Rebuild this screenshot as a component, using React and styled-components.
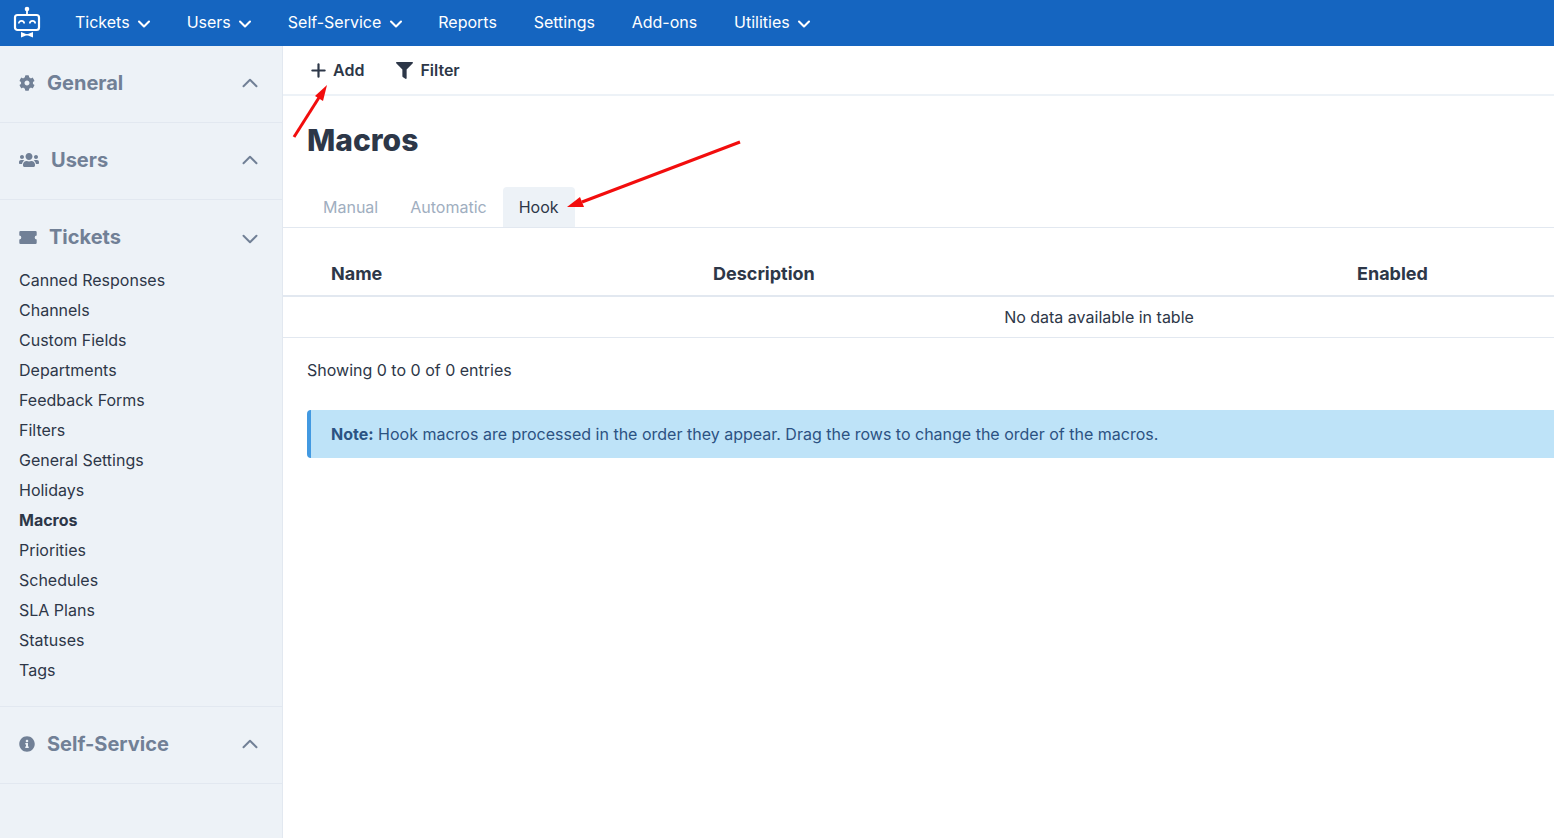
import React from "react";
import styled, { createGlobalStyle } from "styled-components";
import { FaCog, FaUsers, FaInfoCircle, FaFilter } from "react-icons/fa";
import { FiChevronDown, FiChevronUp, FiPlus } from "react-icons/fi";

const GlobalStyle = createGlobalStyle`
    html, body {
        margin: 0;
        height: 100%;
        overflow: hidden;
        background: #fff;
        font-family: Inter, "Liberation Sans", sans-serif;
        color: #2d3748;
    }
    * { box-sizing: border-box; }
`;

const Page = styled.div`
    width: 1554px;
    height: 838px;
    position: relative;
    overflow: hidden;
    display: flex;
    flex-direction: column;
`;

const TopBar = styled.div`
    height: 46px;
    flex: none;
    background: #1565c0;
    display: flex;
    align-items: center;
    padding-left: 12px;
`;

const LogoBox = styled.div`
    width: 30px;
    height: 40px;
    margin-right: 33px;
    display: flex;
`;

const NavItem = styled.div`
    color: #fff;
    font-size: 16px;
    display: flex;
    align-items: center;
    gap: 4.5px;
    padding-bottom: 2px;
    margin-right: ${(p) => (p.$menu ? 32.5 : 36.8)}px;
    svg { font-size: 20px; margin-top: 3px; stroke-width: 2.5; }
`;

const Body = styled.div`
    flex: 1;
    display: flex;
    min-height: 0;
`;

const Sidebar = styled.div`
    width: 283px;
    flex: none;
    background: #edf2f7;
    border-right: 1px solid #e2e8f0;
`;

const Section = styled.div`
    border-bottom: 1px solid #e2e8f0;
`;

const SectionHead = styled.div`
    height: 76px;
    padding: 0 19px 2px 19px;
    display: flex;
    align-items: center;
    color: #718096;
    font-size: 20px;
    font-weight: 700;
`;

const HeadIcon = styled.span`
    display: flex;
    flex: none;
    font-size: ${(p) => p.$size}px;
    margin-right: 12px;
`;

const HeadLabel = styled.span`
    flex: 1;
`;

const Chevron = styled.span`
    display: flex;
    font-size: 26px;
    margin-top: ${(p) => (p.$open ? 3 : 0)}px;
    svg { stroke-width: 1.8; }
`;

const SubList = styled.div`
    padding-bottom: 21px;
    margin-top: -11px;
`;

const SubItem = styled.div`
    height: 30px;
    line-height: 30px;
    padding-left: 19px;
    font-size: 16px;
    font-weight: ${(p) => (p.$active ? 700 : 400)};
    color: #2d3748;
`;

const Main = styled.div`
    flex: 1;
    min-width: 0;
    overflow: hidden;
`;

const Toolbar = styled.div`
    height: 50px;
    border-bottom: 2px solid #edf2f7;
    display: flex;
    align-items: center;
    padding-left: 28px;
    gap: 32px;
`;

const ToolButton = styled.div`
    display: flex;
    align-items: center;
    gap: 7px;
    font-size: 16px;
    font-weight: 600;
    color: #2d3748;
`;

const AddIcon = styled(FiPlus)`
    font-size: 21px;
    stroke-width: 2.5;
    margin: 0 -2.5px 0 -3.5px;
`;

const FilterIcon = styled(FaFilter)`
    font-size: 17px;
`;

const Title = styled.h1`
    margin: 0;
    padding: 24px 0 0 24px;
    font-size: 30px;
    line-height: 40px;
    font-weight: 800;
    color: #2d3748;
`;

const Tabs = styled.div`
    margin-top: 27px;
    height: 41px;
    padding-left: 24px;
    border-bottom: 1px solid #e2e8f0;
    display: flex;
`;

const Tab = styled.div`
    height: 40px;
    line-height: 40px;
    padding: 0 16px;
    font-size: 16px;
    border-radius: 4px 4px 0 0;
    color: ${(p) => (p.$active ? "#2d3748" : "#a0aec0")};
    background: ${(p) => (p.$active ? "#edf2f7" : "transparent")};
`;

const Table = styled.div`
    width: 1632px;
    margin-top: 23px;
`;

const HeadRow = styled.div`
    height: 46px;
    display: grid;
    grid-template-columns: 382px 644px 1fr;
    align-items: center;
    padding-left: 48px;
    border-bottom: 2px solid #e2e8f0;
    font-size: 18px;
    font-weight: 700;
`;

const EmptyRow = styled.div`
    height: 41px;
    line-height: 41px;
    text-align: center;
    font-size: 16px;
    border-bottom: 1px solid #e2e8f0;
`;

const Showing = styled.div`
    padding: 20px 0 0 24px;
    font-size: 16px;
    line-height: 24px;
`;

const Note = styled.div`
    width: 1632px;
    height: 48px;
    margin: 28px 0 0 24px;
    padding-left: 20px;
    line-height: 48px;
    font-size: 16px;
    color: #2c5282;
    background: #bee3f8;
    border-left: 4px solid #4299e1;
    border-radius: 4px;
    b { font-weight: 700; }
`;

const Overlay = styled.svg`
    position: absolute;
    left: 0;
    top: 0;
    pointer-events: none;
`;

const Logo = () => (
    <svg width="30" height="40" viewBox="0 0 30 40" fill="none">
        <circle cx="15" cy="6" r="2.3" fill="#fff" />
        <path d="M15 6v6" stroke="#fff" strokeWidth="1.8" />
        <rect x="3" y="12" width="24" height="15" rx="2.5" stroke="#fff" strokeWidth="2.2" />
        <path d="M6.8 20.5a2.7 2.7 0 0 1 5.4 0M17.8 20.5a2.7 2.7 0 0 1 5.4 0" stroke="#fff" strokeWidth="1.7" />
        <path d="M9 29l5 2h2l5-2v5.5l-5-2h-2l-5 2z" fill="#fff" />
    </svg>
);

const TicketIcon = () => (
    <svg width="18" height="13" viewBox="0 0 18 13" fill="currentColor">
        <path d="M1.5 0h15a1.2 1.2 0 0 1 1.2 1.2v3.3a2 2 0 0 0 0 4v3.3a1.2 1.2 0 0 1-1.2 1.2h-15a1.2 1.2 0 0 1-1.2-1.2v-3.3a2 2 0 0 0 0-4v-3.3a1.2 1.2 0 0 1 1.2-1.2z" />
    </svg>
);

const Arrows = () => (
    <Overlay width="1554" height="838">
        <path d="M294 137L320 96" stroke="#f20d0d" strokeWidth="3" />
        <path d="M327 85L315 96L323 101Z" fill="#f20d0d" />
        <path d="M740 142L582 202" stroke="#f20d0d" strokeWidth="3" />
        <path d="M567 207L580 197L584 207Z" fill="#f20d0d" />
    </Overlay>
);

const navItems = [
    { label: "Tickets", menu: true },
    { label: "Users", menu: true },
    { label: "Self-Service", menu: true },
    { label: "Reports" },
    { label: "Settings" },
    { label: "Add-ons" },
    { label: "Utilities", menu: true },
];

const ticketLinks = [
    "Canned Responses", "Channels", "Custom Fields", "Departments", "Feedback Forms",
    "Filters", "General Settings", "Holidays", "Macros", "Priorities",
    "Schedules", "SLA Plans", "Statuses", "Tags",
];

function SideSection({ icon, size, label, open, children }) {
    return (
        <Section>
            <SectionHead>
                <HeadIcon $size={size}>{icon}</HeadIcon>
                <HeadLabel>{label}</HeadLabel>
                <Chevron $open={open}>{open ? <FiChevronDown /> : <FiChevronUp />}</Chevron>
            </SectionHead>
            {children}
        </Section>
    );
}

export default function App() {
    return (
        <Page>
            <GlobalStyle />
            <TopBar>
                <LogoBox><Logo /></LogoBox>
                {navItems.map((item) => (
                    <NavItem key={item.label} $menu={item.menu}>
                        {item.label}
                        {item.menu && <FiChevronDown />}
                    </NavItem>
                ))}
            </TopBar>
            <Body>
                <Sidebar>
                    <SideSection icon={<FaCog />} size={16} label="General" />
                    <SideSection icon={<FaUsers />} size={20} label="Users" />
                    <SideSection icon={<TicketIcon />} size={16} label="Tickets" open>
                        <SubList>
                            {ticketLinks.map((link) => (
                                <SubItem key={link} $active={link === "Macros"}>{link}</SubItem>
                            ))}
                        </SubList>
                    </SideSection>
                    <SideSection icon={<FaInfoCircle />} size={16} label="Self-Service" />
                </Sidebar>
                <Main>
                    <Toolbar>
                        <ToolButton><AddIcon />Add</ToolButton>
                        <ToolButton><FilterIcon />Filter</ToolButton>
                    </Toolbar>
                    <Title>Macros</Title>
                    <Tabs>
                        <Tab>Manual</Tab>
                        <Tab>Automatic</Tab>
                        <Tab $active>Hook</Tab>
                    </Tabs>
                    <Table>
                        <HeadRow>
                            <span>Name</span>
                            <span>Description</span>
                            <span>Enabled</span>
                        </HeadRow>
                        <EmptyRow>No data available in table</EmptyRow>
                    </Table>
                    <Showing>Showing 0 to 0 of 0 entries</Showing>
                    <Note><b>Note:</b> Hook macros are processed in the order they appear. Drag the rows to change the order of the macros.</Note>
                </Main>
            </Body>
            <Arrows />
        </Page>
    );
}
